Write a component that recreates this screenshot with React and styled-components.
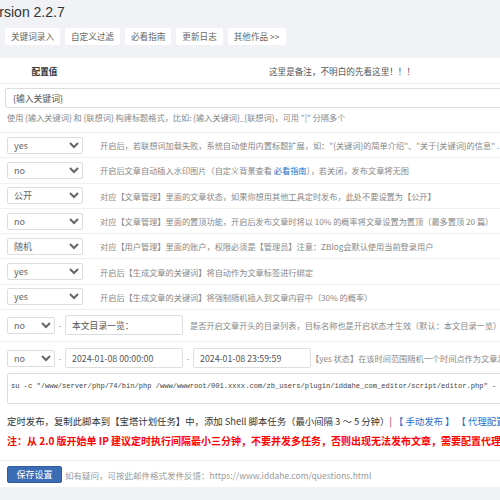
import styled, { createGlobalStyle } from "styled-components";

const GlobalStyle = createGlobalStyle`
  html, body {
    margin: 0;
    padding: 0;
    overflow: hidden;
    background: #f1f2f5;
  }
  body {
    font-family: "Noto Sans CJK SC", "Noto Sans", sans-serif;
    color: #555;
  }
`;

const Page = styled.div`
  width: 600px;
`;

const Top = styled.div`
  background: #f1f2f5;
  padding-bottom: 13px;
`;

const Title = styled.h1`
  margin: 0 0 0 -17px;
  height: 24px;
  font: 400 14px/24px "Liberation Sans", Arial, sans-serif;
  color: #333;
  white-space: nowrap;
`;

const Nav = styled.div`
  display: flex;
  gap: 5px;
  margin-top: 4px;
  padding-left: 5px;
`;

const NavButton = styled.button`
  height: 17px;
  padding: 0 6px;
  border: none;
  border-radius: 2px;
  background: #fff;
  color: #666;
  font-family: inherit;
  font-size: 8.6px;
  line-height: 17px;
  white-space: nowrap;
`;

const Panel = styled.div`
  background: #fff;
`;

const HeadRow = styled.div`
  display: flex;
  align-items: center;
  height: 25px;
  border-bottom: 1px solid #ececec;
`;

const HeadCell = styled.div`
  width: ${(p) => p.$w}px;
  text-align: center;
  font-size: 8.6px;
  font-weight: ${(p) => (p.$bold ? 700 : 400)};
  color: ${(p) => (p.$bold ? "#333" : "#555")};
  white-space: nowrap;
`;

const KeywordBlock = styled.div`
  padding: 4px 0 6px 5px;
  border-bottom: 1px solid #ececec;
`;

const WideInput = styled.input`
  display: block;
  width: 585px;
  height: 20px;
  box-sizing: border-box;
  border: 1px solid #ddd;
  border-radius: 2px;
  padding: 0 7px;
  font-family: inherit;
  font-size: 8.8px;
  color: #555;
  outline: none;
`;

const Hint = styled.div`
  margin-left: 2px;
  height: 18px;
  line-height: 18px;
  font-size: 8.2px;
  color: #888;
  white-space: nowrap;
`;

const OptionRow = styled.div`
  display: flex;
  align-items: center;
  gap: 17px;
  height: 25.3px;
  box-sizing: border-box;
  padding-left: 7px;
  border-bottom: 1px solid #f0f0f0;
`;

const InlineRow = styled.div`
  display: flex;
  align-items: center;
  padding: ${(p) => p.$top}px 0 ${(p) => p.$bottom}px ${(p) => p.$left ?? 7}px;
  border-bottom: ${(p) => (p.$line ? "1px solid #f0f0f0" : "none")};
`;

const Select = styled.select`
  width: ${(p) => p.$w}px;
  height: 17px;
  box-sizing: border-box;
  flex-shrink: 0;
  border: 1px solid #ddd;
  border-radius: 2px;
  padding: 0 2px;
  background: #fff;
  font-family: inherit;
  font-size: 9px;
  color: #666;
`;

const Desc = styled.span`
  margin-left: ${(p) => p.$ml || 0}px;
  font-size: 8.2px;
  color: #888;
  white-space: nowrap;
`;

const Link = styled.a`
  color: #1e6fc8;
  text-decoration: none;
`;

const Dash = styled.span`
  width: 10px;
  text-align: center;
  font-size: 9px;
  color: #aaa;
`;

const SmallInput = styled.input`
  width: 118px;
  height: 20px;
  box-sizing: border-box;
  flex-shrink: 0;
  border: 1px solid #ddd;
  border-radius: 2px;
  padding: 0 6px;
  font-family: inherit;
  font-size: 8.8px;
  color: #555;
  outline: none;
`;

const ScriptBlock = styled.div`
  padding: 0 0 10px 7px;
  border-bottom: 1px solid #ececec;
`;

const Script = styled.textarea`
  display: block;
  width: 583px;
  height: 31px;
  box-sizing: border-box;
  margin-top: 5px;
  border: 1px solid #ddd;
  border-radius: 2px;
  padding: 8px 3px 0;
  font-family: "Liberation Mono", "Courier New", monospace;
  font-size: 7.1px;
  color: #444;
  resize: none;
  overflow: hidden;
  white-space: pre;
  outline: none;
`;

const Note = styled.div`
  margin-top: ${(p) => p.$mt}px;
  height: 18px;
  line-height: 18px;
  font-size: ${(p) => (p.$warn ? 10 : 9.4)}px;
  font-weight: ${(p) => (p.$warn ? 700 : 400)};
  color: ${(p) => (p.$warn ? "#f00" : "#333")};
  white-space: nowrap;
`;

const Bar = styled.span`
  color: #c33;
`;

const Footer = styled.div`
  display: flex;
  align-items: center;
  gap: 3px;
  padding: 5px 0 4px 7px;
`;

const SaveButton = styled.button`
  width: 55px;
  height: 17px;
  padding: 0;
  border: 1px solid #2f5d9f;
  border-radius: 2px;
  background: #3b6cb4;
  color: #fff;
  font-family: inherit;
  font-size: 9px;
  line-height: 15px;
`;

const FootNote = styled.span`
  font-size: 8.5px;
  color: #999;
  white-space: nowrap;
`;

const navItems = ["关键词录入", "自定义过滤", "必看指南", "更新日志", "其他作品 >>"];

const options = [
  {
    value: "yes",
    choices: ["yes", "no"],
    text: '开启后，若联想词加载失败，系统自动使用内置标题扩展，如："{关键词}的简单介绍"、"关于{关键词}的信息" ...',
  },
  { value: "no", choices: ["yes", "no"], guide: true },
  {
    value: "公开",
    choices: ["公开", "草稿"],
    text: "对应【文章管理】里面的文章状态，如果你想用其他工具定时发布，此处不要设置为【公开】",
  },
  {
    value: "no",
    choices: ["yes", "no"],
    text: "对应【文章管理】里面的置顶功能，开启后发布文章时将以 10% 的概率将文章设置为置顶（最多置顶 20 篇）",
  },
  {
    value: "随机",
    choices: ["随机", "admin"],
    text: "对应【用户管理】里面的账户，权限必须是【管理员】注意：ZBlog会默认使用当前登录用户",
  },
  {
    value: "yes",
    choices: ["yes", "no"],
    text: "开启后【生成文章的关键词】将自动作为文章标签进行绑定",
  },
  {
    value: "yes",
    choices: ["yes", "no"],
    text: "开启后【生成文章的关键词】将强制随机插入到文章内容中（30% 的概率）",
  },
];

const script =
  'su -c "/www/server/php/74/bin/php /www/wwwroot/001.xxxx.com/zb_users/plugin/iddahe_com_editor/script/editor.php" -';

function Choice({ value, choices, w }) {
  return (
    <Select $w={w} defaultValue={value}>
      {choices.map((c) => (
        <option key={c} value={c}>
          {c}
        </option>
      ))}
    </Select>
  );
}

export default function App() {
  return (
    <Page>
      <GlobalStyle />
      <Top>
        <Title>Version 2.2.7</Title>
        <Nav>
          {navItems.map((n) => (
            <NavButton key={n}>{n}</NavButton>
          ))}
        </Nav>
      </Top>
      <Panel>
        <HeadRow>
          <HeadCell $w={89} $bold>
            配置值
          </HeadCell>
          <HeadCell $w={506}>这里是备注，不明白的先看这里！！！</HeadCell>
        </HeadRow>
        <KeywordBlock>
          <WideInput defaultValue="{输入关键词}" />
          <Hint>
            使用 {"{输入关键词}"} 和 {"{联想词}"} 构建标题格式，比如: {"{输入关键词}_{联想词}"}，可用 "|" 分隔多个
          </Hint>
        </KeywordBlock>
        {options.map((o, i) => (
          <OptionRow key={i}>
            <Choice value={o.value} choices={o.choices} w={76} />
            {o.guide ? (
              <Desc>
                开启后文章自动插入水印图片（自定义背景查看 <Link href="#">必看指南</Link>），若关闭，发布文章将无图
              </Desc>
            ) : (
              <Desc>{o.text}</Desc>
            )}
          </OptionRow>
        ))}
        <InlineRow $top={5} $bottom={6} $line>
          <Choice value="no" choices={["yes", "no"]} w={48} />
          <Dash>-</Dash>
          <SmallInput defaultValue="本文目录一览：" />
          <Desc $ml={7}>是否开启文章开头的目录列表，目标名称也是开启状态才生效（默认：本文目录一览）</Desc>
        </InlineRow>
        <ScriptBlock>
          <InlineRow $top={6} $bottom={0} $left={0}>
            <Choice value="no" choices={["yes", "no"]} w={48} />
            <Dash>-</Dash>
            <SmallInput defaultValue="2024-01-08 00:00:00" />
            <Dash>-</Dash>
            <SmallInput defaultValue="2024-01-08 23:59:59" />
            <Desc>【yes 状态】在该时间范围随机一个时间点作为文章发布时间</Desc>
          </InlineRow>
          <Script readOnly value={script} />
          <Note $mt={8}>
            定时发布，复制此脚本到【宝塔计划任务】中，添加 Shell 脚本任务（最小间隔 3 ～ 5 分钟）<Bar>|</Bar>{" "}
            <Link href="#">【 手动发布 】</Link> <Link href="#">【 代理配置 】</Link>
          </Note>
          <Note $mt={2} $warn>
            注：从 2.0 版开始单 IP 建议定时执行间隔最小三分钟，不要并发多任务，否则出现无法发布文章，需要配置代理IP
          </Note>
        </ScriptBlock>
        <Footer>
          <SaveButton>保存设置</SaveButton>
          <FootNote>如有疑问，可按此邮件格式发件反馈：https://www.iddahe.com/questions.html</FootNote>
        </Footer>
      </Panel>
    </Page>
  );
}
